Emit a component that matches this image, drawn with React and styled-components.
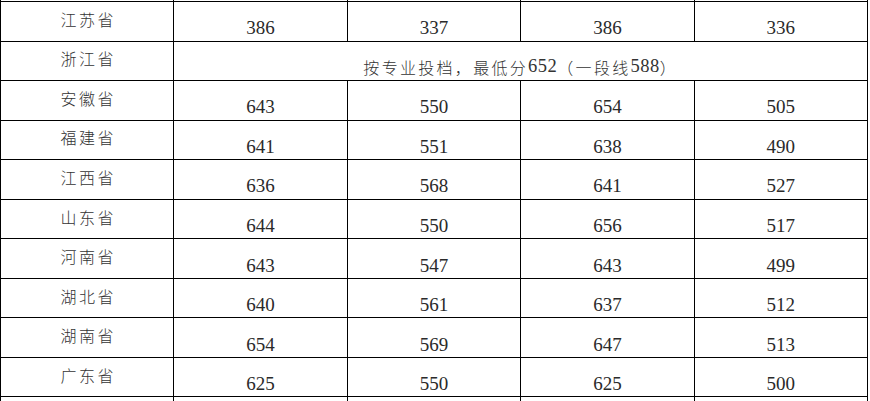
import React from 'react';
import styled, { createGlobalStyle } from 'styled-components';

const GlobalStyle = createGlobalStyle`
  html, body {
    margin: 0;
    padding: 0;
    background: #ffffff;
    overflow: hidden;
  }
`;

const Page = styled.div`
  width: 870px;
  height: 401px;
  overflow: hidden;
  background: #ffffff;
`;

const Grid = styled.div`
  width: 868px;
  box-sizing: border-box;
  margin-top: -37.55px;
  padding: 0 1px;
  display: grid;
  grid-template-columns: repeat(5, 1fr);
  grid-auto-rows: 38.55px;
  gap: 1px;
  background: #000000;
  font-family: "Liberation Serif", "Noto Sans CJK SC", serif;
  color: #2a2a2a;
`;

const Cell = styled.div`
  background: #ffffff;
  display: flex;
  justify-content: center;
  align-items: center;
  box-sizing: border-box;
  min-width: 0;
`;

const Province = styled(Cell)`
  padding-bottom: 5px;
  font-family: "Noto Sans CJK SC", sans-serif;
  font-weight: 300;
  font-size: 16px;
  letter-spacing: 2.5px;
  padding-left: 2px;
  color: #333333;
`;

const Score = styled(Cell)`
  padding-top: 14px;
  font-size: 19px;
`;

const Merged = styled(Cell)`
  grid-column: 2 / span 4;
  padding-top: 12px;
  font-size: 18.5px;
  letter-spacing: 0.5px;
  color: #333333;
`;

const Han = styled.span`
  font-family: "Noto Sans CJK SC", sans-serif;
  font-weight: 300;
  font-size: 16px;
  letter-spacing: 2.3px;
`;

const rows = [
  { name: '江苏省', scores: [386, 337, 386, 336] },
  { name: '浙江省', note: true },
  { name: '安徽省', scores: [643, 550, 654, 505] },
  { name: '福建省', scores: [641, 551, 638, 490] },
  { name: '江西省', scores: [636, 568, 641, 527] },
  { name: '山东省', scores: [644, 550, 656, 517] },
  { name: '河南省', scores: [643, 547, 643, 499] },
  { name: '湖北省', scores: [640, 561, 637, 512] },
  { name: '湖南省', scores: [654, 569, 647, 513] },
  { name: '广东省', scores: [625, 550, 625, 500] },
];

const EmptyRow = ({ prefix }) =>
  [0, 1, 2, 3, 4].map((i) => <Cell key={`${prefix}-${i}`} />);

export default function App() {
  return (
    <Page>
      <GlobalStyle />
      <Grid>
        <EmptyRow prefix="top" />
        {rows.map((row) => (
          <React.Fragment key={row.name}>
            <Province>{row.name}</Province>
            {row.note ? (
              <Merged>
                <Han>按专业投档，最低分</Han>652 <Han>（一段线</Han>588<Han>）</Han>
              </Merged>
            ) : (
              row.scores.map((s, i) => <Score key={i}>{s}</Score>)
            )}
          </React.Fragment>
        ))}
        <EmptyRow prefix="bottom" />
      </Grid>
    </Page>
  );
}
